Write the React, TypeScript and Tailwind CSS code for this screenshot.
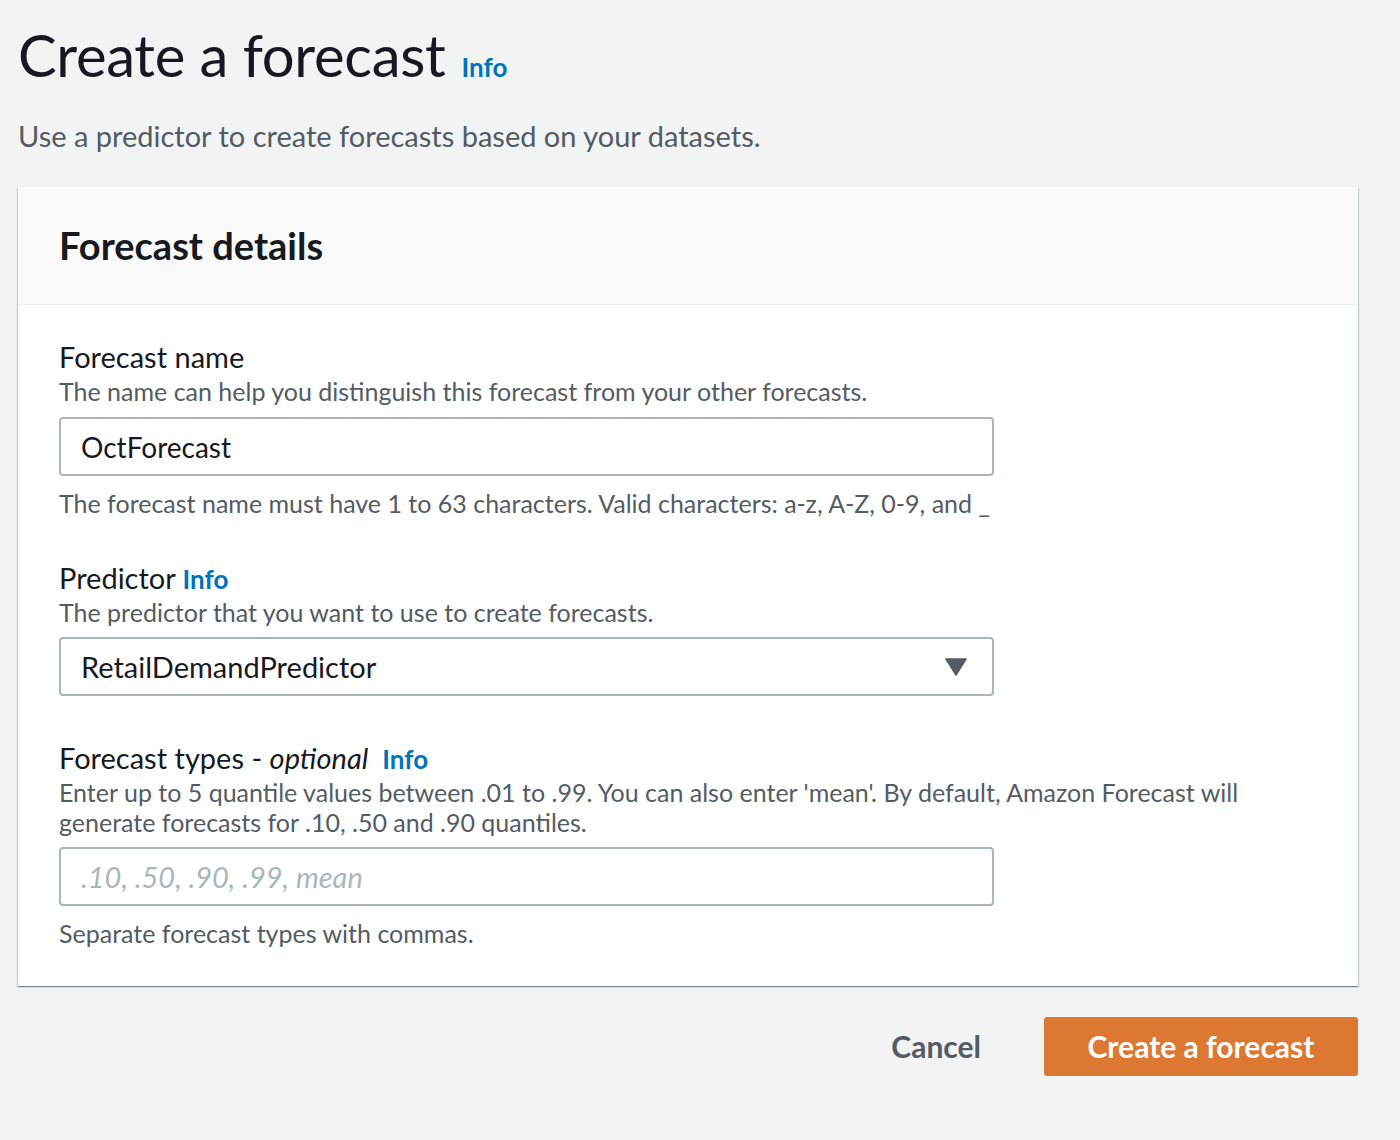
import { useState } from 'react';

const FONT = { fontFamily: 'Lato, "Open Sans", Arial, sans-serif' };

function InfoLink({ className = '' }: { className?: string }) {
  return (
    <a href="#" className={`font-bold leading-none text-[#0073bb] ${className}`}>
      Info
    </a>
  );
}

export default function App() {
  const [name, setName] = useState('OctForecast');
  const [types, setTypes] = useState('');

  return (
    <div style={FONT} className="min-h-[1140px] w-[1400px] bg-[#f2f3f3] pl-[18px] pr-[42px] text-[#16191f]">

      {/* Page header */}
      <div className="flex items-baseline gap-[16px] pt-[18px]">
        <h1 className="text-[58px] leading-[74px] font-normal tracking-[-0.3px]">
          Create a forecast
        </h1>
        <InfoLink className="text-[26px]" />
      </div>

      <p className="mt-[26px] text-[29px] leading-[36px] text-[#545b64]">
        Use a predictor to create forecasts based on your datasets.
      </p>

      {/* Container */}
      <div className="mt-[33px] bg-white shadow-[0_1px_1px_0_rgba(0,28,36,0.3),1px_1px_1px_0_rgba(0,28,36,0.15),-1px_1px_1px_0_rgba(0,28,36,0.15)]">

        <div className="border-b border-[#eaeded] bg-[#fafafa] px-[41px] py-[38px]">
          <h2 className="text-[38px] leading-[41px] font-bold">
            Forecast details
          </h2>
        </div>

        <div className="px-[41px] pt-[34px] pb-[38px]">

          {/* Forecast name */}
          <div className="h-[36px] text-[29px] leading-[36px]">Forecast name</div>
          <div className="mt-[1px] h-[30px] text-[25px] leading-[30px] text-[#545b64]">
            The name can help you distinguish this forecast from your other forecasts.
          </div>
          <input
            type="text"
            value={name}
            onChange={(e) => setName(e.target.value)}
            className="mt-[11px] block h-[59px] w-[935px] rounded-[4px] border-2 border-[#aab7b8] px-[20px] text-[28px] text-[#16191f] outline-none"
          />
          <div className="mt-[12px] h-[30px] text-[25px] leading-[30px] text-[#545b64]">
            The forecast name must have 1 to 63 characters. Valid characters: a-z, A-Z, 0-9, and _
          </div>

          {/* Predictor */}
          <div className="mt-[42px] h-[36px] text-[29px] leading-[36px]">
            Predictor <InfoLink className="text-[26px]" />
          </div>
          <div className="mt-[1px] h-[30px] text-[25px] leading-[30px] text-[#545b64]">
            The predictor that you want to use to create forecasts.
          </div>
          <button
            type="button"
            className="mt-[10px] flex h-[59px] w-[935px] items-center justify-between rounded-[4px] border-2 border-[#aab7b8] pl-[20px] pr-[25px] text-[29px]"
          >
            <span>RetailDemandPredictor</span>
            <svg width="22" height="18" viewBox="0 0 22 18">
              <path d="M1 1 H21 L11 17 Z" fill="#545b64" stroke="#545b64" strokeWidth="1.5" strokeLinejoin="round" />
            </svg>
          </button>

          {/* Forecast types */}
          <div className="mt-[44px] h-[36px] text-[29px] leading-[36px]">
            Forecast types - <i>optional</i>
            <InfoLink className="ml-[14px] text-[26px]" />
          </div>
          <div className="mt-[1px] w-[1200px] text-[25px] leading-[30px] text-[#545b64]">
            Enter up to 5 quantile values between .01 to .99. You can also enter 'mean'. By default, Amazon Forecast will generate forecasts for .10, .50 and .90 quantiles.
          </div>
          <input
            type="text"
            value={types}
            onChange={(e) => setTypes(e.target.value)}
            placeholder=".10, .50, .90, .99, mean"
            className="mt-[10px] block h-[59px] w-[935px] rounded-[4px] border-2 border-[#aab7b8] px-[20px] text-[29px] outline-none placeholder:italic placeholder:text-[#aab7b8]"
          />
          <div className="mt-[12px] h-[30px] text-[25px] leading-[30px] text-[#545b64]">
            Separate forecast types with commas.
          </div>

        </div>
      </div>

      {/* Actions */}
      <div className="mt-[31px] flex items-center justify-end gap-[63px]">
        <button type="button" className="text-[30px] font-bold text-[#545b64]">
          Cancel
        </button>
        <button
          type="button"
          className="h-[59px] w-[314px] rounded-[3px] bg-[#dd7833] text-[30px] font-bold text-white"
        >
          Create a forecast
        </button>
      </div>

    </div>
  );
}
